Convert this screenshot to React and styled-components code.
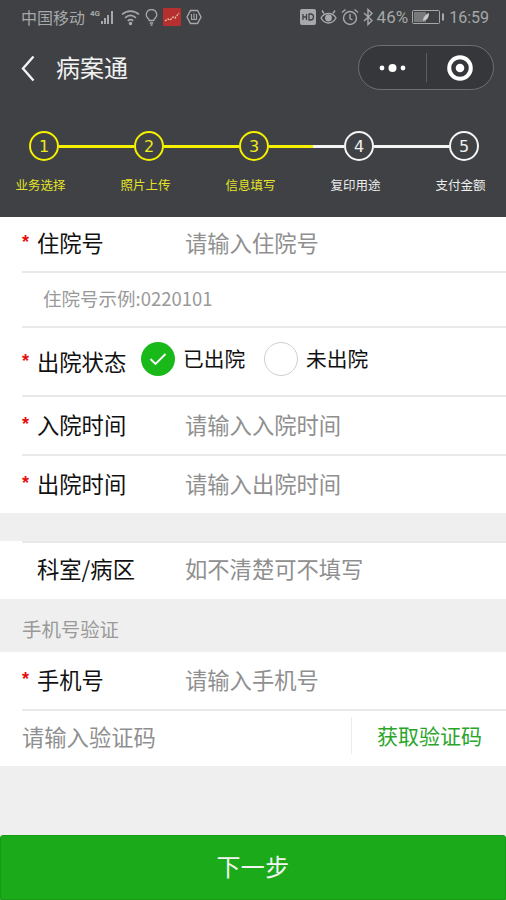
import React from "react";
import styled, { createGlobalStyle } from "styled-components";

const GlobalStyle = createGlobalStyle`
  html, body {
    margin: 0;
    padding: 0;
    background: #efefef;
  }
  * {
    box-sizing: border-box;
  }
`;

const Page = styled.div`
  display: flex;
  flex-direction: column;
  width: 506px;
  height: 900px;
  overflow: hidden;
  background: #efefef;
  color: #111;
  font-family: "Noto Sans CJK SC", "Noto Sans", sans-serif;
`;

const Header = styled.header`
  display: flex;
  flex-direction: column;
  height: 217px;
  flex: none;
  background: #3f4144;
`;

const StatusBar = styled.div`
  display: flex;
  align-items: center;
  justify-content: space-between;
  height: 34px;
  padding: 0 17px 0 21px;
  color: #a6a8aa;
  font-family: "Roboto", "Noto Sans CJK SC", sans-serif;
  font-size: 16px;
`;

const StatusGroup = styled.div`
  display: flex;
  align-items: center;
  gap: ${(p) => p.$gap || 5}px;
`;

const Carrier = styled.span`
  font-family: "Noto Sans CJK SC", sans-serif;
  font-size: 16px;
  line-height: 20px;
`;

const Percent = styled.span`
  font-size: 17px;
`;

const Nav = styled.div`
  display: flex;
  align-items: center;
  height: 68px;
  padding: 0 12px 0 21px;
`;

const NavTitle = styled.h1`
  flex: 1;
  margin: -2px 0 0 21px;
  color: #f2f2f2;
  font-size: 24px;
  font-weight: 400;
  line-height: 32px;
`;

const Capsule = styled.div`
  display: flex;
  align-items: center;
  width: 136px;
  height: 45px;
  margin-top: -1px;
  background: #35373a;
  border: 1px solid #6d6f71;
  border-radius: 23px;
`;

const CapsulePart = styled.div`
  display: flex;
  flex: 1;
  align-items: center;
  justify-content: center;
`;

const CapsuleLine = styled.div`
  width: 1px;
  height: 29px;
  background: #5b5d60;
`;

const Rail = styled.div`
  display: flex;
  align-items: center;
  margin-top: 29px;
  padding-left: 29px;
`;

const Circle = styled.div`
  display: flex;
  flex: none;
  align-items: center;
  justify-content: center;
  width: 30px;
  height: 30px;
  border: 2px solid ${(p) => (p.$active ? "#f4f000" : "#f4f4f4")};
  border-radius: 50%;
  color: ${(p) => (p.$active ? "#eeea1a" : "#f0f0f0")};
  font-family: "DejaVu Sans", sans-serif;
  font-size: 16px;
`;

const Line = styled.div`
  flex: none;
  width: 75px;
  height: 3px;
  background: ${(p) => p.$fill};
`;

const Labels = styled.div`
  display: grid;
  grid-template-columns: repeat(5, 105px);
  margin: 14px 0 0 -12px;
`;

const StepLabel = styled.div`
  color: ${(p) => (p.$active ? "#e6e32a" : "#eeeeee")};
  font-size: 12.5px;
  line-height: 20px;
  text-align: center;
`;

const Row = styled.div`
  flex: none;
  height: ${(p) => p.$h}px;
  background: #fff;
`;

const RowInner = styled.div`
  display: flex;
  align-items: center;
  height: 100%;
  margin-left: 22px;
  padding-bottom: ${(p) => p.$lift ?? 4}px;
  border-bottom: ${(p) => (p.$line ? "2px solid #e9e9e9" : "none")};
  border-top: ${(p) => (p.$top ? "2px solid #e9e9e9" : "none")};
`;

const Star = styled.span`
  flex: none;
  width: 15px;
  color: #e60f0f;
  font-family: "Liberation Sans", sans-serif;
  font-size: 18px;
  font-weight: 700;
  line-height: 20px;
`;

const Label = styled.span`
  flex: none;
  width: ${(p) => p.$w || (p.$star ? 148 : 163)}px;
  padding-left: ${(p) => (p.$star ? 0 : 15)}px;
  font-size: 22.3px;
  line-height: 30px;
`;

const Placeholder = styled.span`
  color: #8f8f8f;
  font-size: 22.3px;
  line-height: 30px;
`;

const Hint = styled.span`
  padding-left: 21px;
  color: #999;
  font-size: 18.5px;
  line-height: 26px;
`;

const RadioGroup = styled.div`
  display: flex;
  align-items: center;
  margin: -3px 0 0 -1px;
`;

const RadioOption = styled.div`
  display: flex;
  align-items: center;
  gap: 8px;
  margin-right: 19px;
`;

const RadioMark = styled.div`
  display: flex;
  align-items: center;
  justify-content: center;
  width: 34px;
  height: 34px;
  background: ${(p) => (p.$on ? "#18b918" : "#fff")};
  border: ${(p) => (p.$on ? "none" : "1px solid #cfcfcf")};
  border-radius: 50%;
`;

const RadioText = styled.span`
  margin-top: -3px;
  font-size: 20.7px;
  line-height: 28px;
`;

const Gap = styled.div`
  flex: none;
  height: ${(p) => p.$h}px;
`;

const SectionTitle = styled.div`
  display: flex;
  flex: none;
  align-items: center;
  height: 53px;
  padding: 6px 0 0 22px;
  color: #999;
  font-size: 19.4px;
`;

const CodeRow = styled.div`
  display: flex;
  flex: none;
  align-items: center;
  height: 55px;
  padding: 0 0 6px 22px;
  background: #fff;
`;

const CodeInput = styled(Placeholder)`
  flex: 1;
`;

const CodeButton = styled.span`
  flex: none;
  width: 155px;
  height: 37px;
  padding-left: 25px;
  border-left: 1px solid #ececec;
  color: #2aa52a;
  font-size: 21px;
  line-height: 37px;
`;

const Spacer = styled.div`
  flex: 1;
`;

const NextButton = styled.button`
  flex: none;
  height: 65px;
  padding: 0 0 4px;
  background: #1bab1a;
  border: 1px solid #179a16;
  border-radius: 3px 3px 0 0;
  color: #f4f4f4;
  font-family: inherit;
  font-size: 24px;
  letter-spacing: 0.3px;
`;

const steps = [
  { n: 1, label: "业务选择", active: true },
  { n: 2, label: "照片上传", active: true },
  { n: 3, label: "信息填写", active: true },
  { n: 4, label: "复印用途" },
  { n: 5, label: "支付金额" },
];

const YELLOW = "#f4f000";
const lineFills = [
  YELLOW,
  YELLOW,
  `linear-gradient(90deg, ${YELLOW} 0 44px, #f4f4f4 44px)`,
  "#f4f4f4",
];

const Signal = () => (
  <svg width="26" height="20" viewBox="0 0 26 20" fill="#a6a8aa">
    <text x="0" y="9" fontSize="8" fontWeight="700" fontFamily="Roboto, sans-serif">4G</text>
    <rect x="11" y="14" width="2" height="3" />
    <rect x="14" y="11" width="2" height="6" />
    <rect x="17" y="8" width="2" height="9" />
    <rect x="21" y="4" width="2" height="13" />
  </svg>
);

const Wifi = () => (
  <svg width="19" height="17" viewBox="0 0 19 17" fill="none" stroke="#a6a8aa" strokeWidth="1.6">
    <path d="M1 5.5C6 1 13 1 18 5.5" />
    <path d="M4 8.8C7.5 5.8 11.5 5.8 15 8.8" />
    <path d="M6.8 11.8C8.5 10.4 10.5 10.4 12.2 11.8" />
    <circle cx="9.5" cy="14.5" r="1" fill="#a6a8aa" />
  </svg>
);

const Bulb = () => (
  <svg width="13" height="17" viewBox="0 0 13 17" fill="none" stroke="#a6a8aa" strokeWidth="1.3">
    <path d="M4.3 11.5C3.8 9.5 1.2 8.5 1.2 5.8a5.3 5.3 0 0 1 10.6 0c0 2.7-2.6 3.7-3.1 5.7z" />
    <path d="M4.8 14h3.4M5.5 16h2" />
  </svg>
);

const RedChart = () => (
  <svg width="18" height="18" viewBox="0 0 18 18">
    <rect width="18" height="18" rx="1" fill="#b5302f" />
    <path d="M2 13l3-2 2 1 3-3 2 1 4-5" fill="none" stroke="#e8b9a8" strokeWidth="1.4" strokeDasharray="2 1" />
  </svg>
);

const Hex = () => (
  <svg width="16" height="16" viewBox="0 0 16 16" fill="none" stroke="#a6a8aa" strokeWidth="1.4">
    <path d="M4.5 1.5h7L15 8l-3.5 6.5h-7L1 8z" />
    <path d="M5.5 5v5.5h5V5M8 4.5v6" strokeWidth="1.1" />
  </svg>
);

const HdBadge = () => (
  <svg width="16" height="16" viewBox="0 0 16 16">
    <rect width="16" height="16" rx="2" fill="#a6a8aa" />
    <path d="M3 5v6M3 8h3.5M6.5 5v6" stroke="#3f4144" strokeWidth="1.3" fill="none" />
    <path d="M9 5v6h1.5c1.9 0 3-1.2 3-3s-1.1-3-3-3z" stroke="#3f4144" strokeWidth="1.3" fill="none" />
  </svg>
);

const Eye = () => (
  <svg width="17" height="16" viewBox="0 0 17 16" fill="none" stroke="#a6a8aa" strokeWidth="1.4">
    <path d="M1 9c2-3.5 4.5-4.5 7.5-4.5S14 5.5 16 9c-2 3.5-4.5 5-7.5 5S3 12.5 1 9z" />
    <circle cx="8.5" cy="9" r="2.7" fill="#a6a8aa" />
    <path d="M2 1.5l2 3M15 1.5l-2 3" />
  </svg>
);

const Alarm = () => (
  <svg width="18" height="18" viewBox="0 0 18 18" fill="none" stroke="#a6a8aa" strokeWidth="1.4">
    <circle cx="9" cy="10" r="6.5" />
    <path d="M9 6v4.5l2.5 1.5M1 4.5L4.5 1.5M17 4.5L13.500 1.5" />
  </svg>
);

const Bluetooth = () => (
  <svg width="10" height="18" viewBox="0 0 10 18" fill="none" stroke="#a6a8aa" strokeWidth="1.4">
    <path d="M1 5l8 7.500L5 16.500V1.500L9 5.500 1 13" />
  </svg>
);

const Battery = () => (
  <svg width="33" height="14" viewBox="0 0 33 14">
    <rect x="0.5" y="0.5" width="27" height="13" rx="1" fill="none" stroke="#a6a8aa" />
    <rect x="2" y="2" width="12" height="10" fill="#a6a8aa" opacity="0.55" />
    <path d="M11 11c0-4 3-7 6-8 0 4-1.5 7-5 7.5z" fill="#c8c8c8" />
    <rect x="30" y="3.5" width="2" height="7" fill="#a6a8aa" />
  </svg>
);

const Chevron = () => (
  <svg width="14" height="27" viewBox="0 0 14 27" fill="none" stroke="#f2f2f2" strokeWidth="2.4">
    <path d="M12.5 1.5L2 13.5l10.500 12" />
  </svg>
);

const Dots = () => (
  <svg width="27" height="10" viewBox="0 0 27 10" fill="#fff">
    <circle cx="3" cy="5" r="2.4" />
    <circle cx="13.5" cy="5" r="4" />
    <circle cx="24" cy="5" r="2.4" />
  </svg>
);

const Target = () => (
  <svg width="26" height="26" viewBox="0 0 26 26">
    <circle cx="13" cy="13" r="10.8" fill="none" stroke="#fff" strokeWidth="4" />
    <circle cx="13" cy="13" r="4.3" fill="#fff" />
  </svg>
);

const Check = () => (
  <svg width="18" height="14" viewBox="0 0 18 14" fill="none" stroke="#fff" strokeWidth="1.8">
    <path d="M1.5 7l5 5L16.5 2" />
  </svg>
);

const Field = ({ h, label, star, placeholder, line }) => (
  <Row $h={h}>
    <RowInner $line={line}>
      {star && <Star>*</Star>}
      <Label $star={star}>{label}</Label>
      <Placeholder>{placeholder}</Placeholder>
    </RowInner>
  </Row>
);

export default function App() {
  return (
    <Page>
      <GlobalStyle />
      <Header>
        <StatusBar>
          <StatusGroup $gap={5}>
            <Carrier>中国移动</Carrier>
            <Signal />
            <Wifi />
            <Bulb />
            <RedChart />
            <Hex />
          </StatusGroup>
          <StatusGroup $gap={4}>
            <HdBadge />
            <Eye />
            <Alarm />
            <Bluetooth />
            <Percent>46%</Percent>
            <Battery />
            <span>16:59</span>
          </StatusGroup>
        </StatusBar>
        <Nav>
          <Chevron />
          <NavTitle>病案通</NavTitle>
          <Capsule>
            <CapsulePart>
              <Dots />
            </CapsulePart>
            <CapsuleLine />
            <CapsulePart>
              <Target />
            </CapsulePart>
          </Capsule>
        </Nav>
        <Rail>
          {steps.map((step, i) => (
            <React.Fragment key={step.n}>
              <Circle $active={step.active}>{step.n}</Circle>
              {i < lineFills.length && <Line $fill={lineFills[i]} />}
            </React.Fragment>
          ))}
        </Rail>
        <Labels>
          {steps.map((step) => (
            <StepLabel key={step.n} $active={step.active}>
              {step.label}
            </StepLabel>
          ))}
        </Labels>
      </Header>

      <Field h={56} star label="住院号" placeholder="请输入住院号" line />
      <Row $h={55}>
        <RowInner $line>
          <Hint>住院号示例:0220101</Hint>
        </RowInner>
      </Row>
      <Row $h={69}>
        <RowInner $line $lift={2}>
          <Star>*</Star>
          <Label $star $w={105}>
            出院状态
          </Label>
          <RadioGroup>
            <RadioOption>
              <RadioMark $on>
                <Check />
              </RadioMark>
              <RadioText>已出院</RadioText>
            </RadioOption>
            <RadioOption>
              <RadioMark />
              <RadioText>未出院</RadioText>
            </RadioOption>
          </RadioGroup>
        </RowInner>
      </Row>
      <Field h={59} star label="入院时间" placeholder="请输入入院时间" line />
      <Field h={57} star label="出院时间" placeholder="请输入出院时间" />
      <Gap $h={28} />
      <Row $h={58}>
        <RowInner $top $lift={6}>
          <Label>科室/病区</Label>
          <Placeholder>如不清楚可不填写</Placeholder>
        </RowInner>
      </Row>
      <SectionTitle>手机号验证</SectionTitle>
      <Field h={59} star label="手机号" placeholder="请输入手机号" line />
      <CodeRow>
        <CodeInput>请输入验证码</CodeInput>
        <CodeButton>获取验证码</CodeButton>
      </CodeRow>
      <Spacer />
      <NextButton>下一步</NextButton>
    </Page>
  );
}
